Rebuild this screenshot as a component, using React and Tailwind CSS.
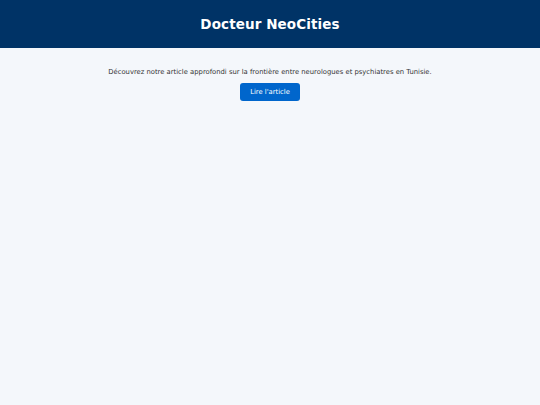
import React from "react";

export default function App() {
  return (
    <div
      className="min-h-screen bg-[#f4f7fb] text-[#333]"
      style={{ fontFamily: '"DejaVu Sans", Verdana, sans-serif' }}
    >
      <header className="h-[48px] bg-[#003366] flex items-center justify-center">
        <h1 className="text-[13.5px] font-bold text-white tracking-[0.1px] pt-[1px]">Docteur NeoCities</h1>
      </header>
      <main className="flex flex-col items-center pt-[20px]">
        <p className="text-[6.8px] leading-[9px] text-[#333]">
          Découvrez notre article approfondi sur la frontière entre neurologues et psychiatres en Tunisie.
        </p>
        <a
          href="#"
          className="mt-[6px] h-[18px] w-[60px] flex items-center justify-center rounded-[3px] bg-[#0066cc] text-white text-[6.8px]"
        >
          Lire l'article
        </a>
      </main>
    </div>
  );
}
